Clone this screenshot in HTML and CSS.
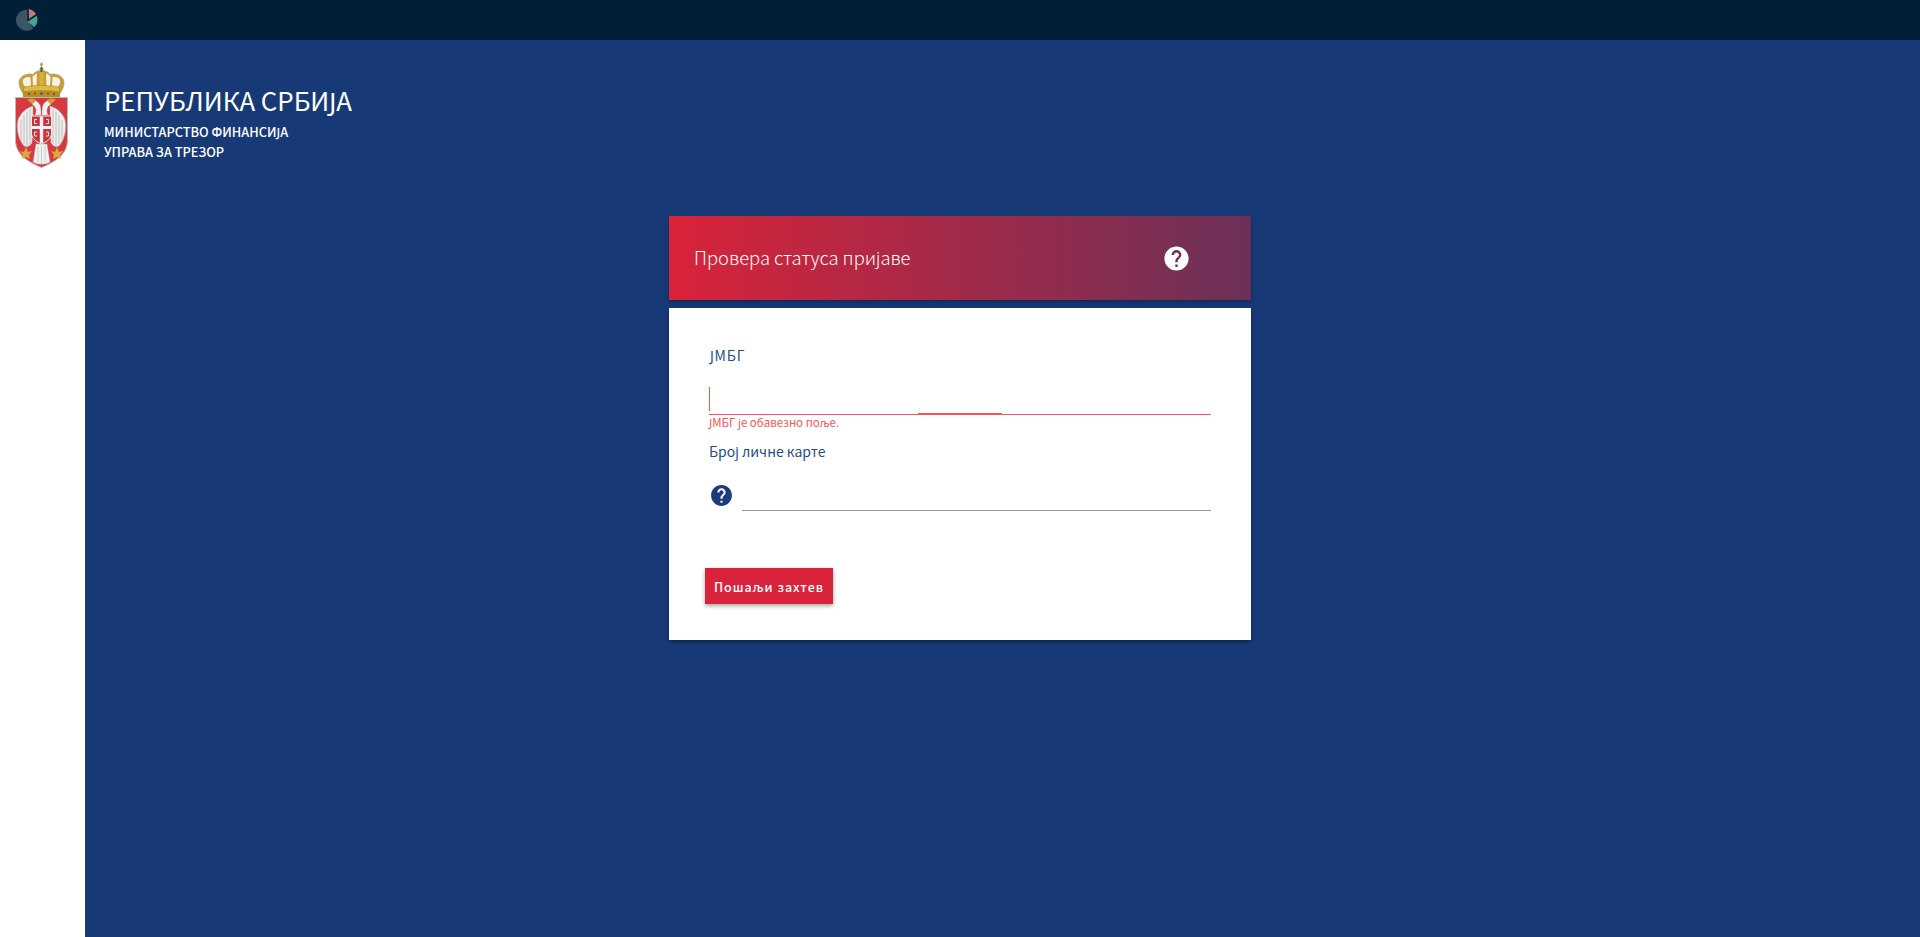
FILE: index.html
```html
<!DOCTYPE html>
<html lang="sr">
<head>
    <meta charset="UTF-8">
    <meta name="viewport" content="width=device-width, initial-scale=1.0">
    <title>Провера статуса пријаве</title>
    <link rel="stylesheet" href="styles.css">
</head>
<body>
    <header class="topbar">
        <svg class="pie" width="24" height="24" viewBox="0 0 24 24">
            <path d="M12.3 1.800A10.500 10.500 0 1 0 18.300 20.300L12.300 12Z" fill="#3a5565"/>
            <path d="M13.700 1A11 11 0 0 1 21 6L14 11Z" fill="#c27b78"/>
            <path d="M21.700 7.700A11 11 0 0 1 19.300 19.300L12.700 13.700Z" fill="#3fa58c"/>
        </svg>
    </header>
    <div class="layout">
        <aside class="sidebar">
            <svg class="crest" width="53" height="106" viewBox="15 62 53 106">
                <!-- crown -->
                <path d="M25 96C20 90 18 84 19.500 80C21.500 75 28 73 33 74.500C35 71.500 38 70.500 41.500 70.500C45 70.500 48 71.500 50 74.500C55 73 61.500 75 63.500 80C65 84 63 90 58 96Z" fill="#c8a030" stroke="#a8a08c" stroke-width="0.7"/>
                <path d="M26 88C23.500 85 22 82 23 80C24.500 77 28 76.500 30.500 77.500L31 87ZM57 88C59.500 85 61 82 60 80C58.500 77 55 76.500 52.500 77.500L52 87Z" fill="#f5f2e8"/>
                <path d="M33 86.500L32.500 77C33.500 75.500 35 74 37 73.500L36.500 86ZM50 86.500L50.500 77C49.500 75.500 48 74 46 73.500L46.500 86Z" fill="#f5f2e8"/>
                <rect x="39.500" y="68" width="4" height="19" fill="#d9b040"/>
                <rect x="40.500" y="67" width="2" height="5" fill="#2c5b8f"/>
                <path d="M41.500 62L43.200 64.500L41.500 67.200L39.800 64.500Z" fill="#c8a030"/>
                <path d="M24 87C32 85 51 85 59 87L60 92C50 90.500 33 90.500 23 92Z" fill="#dcb846" stroke="#8d6a1c" stroke-width="0.4"/>
                <path d="M23 91.500C33 90 50 90 60 91.500L60 97H23Z" fill="#b98e1f"/>
                <circle cx="29" cy="94" r="1.100" fill="#2c5b8f"/>
                <circle cx="41.500" cy="93.500" r="1.300" fill="#2c5b8f"/>
                <circle cx="54" cy="94" r="1.100" fill="#2c5b8f"/>
                <circle cx="35" cy="93.500" r="0.900" fill="#b5282c"/>
                <circle cx="48" cy="93.500" r="0.900" fill="#b5282c"/>
                <!-- shield -->
                <path d="M15.500 97.500H67.500V140C67.500 156 52 163 41.500 167.500C31 163 15.500 156 15.500 140Z" fill="#d8383f" stroke="#b9b9b9" stroke-width="1"/>
                <!-- eagle -->
                <path d="M33 106C26 108 19 114 17.500 122C16.500 130 18.500 140 24 146C27 148 30 146 32 143L33 118Z" fill="#ececec" stroke="#a9a9a9" stroke-width="0.5"/>
                <path d="M50 106C57 108 64 114 65.500 122C66.500 130 64.500 140 59 146C56 148 53 146 51 143L50 118Z" fill="#ececec" stroke="#a9a9a9" stroke-width="0.5"/>
                <path d="M21 120V140M24 115V144M27 112V146M30 109V145M62 120V140M59 115V144M56 112V146M53 109V145" stroke="#a8a8a8" stroke-width="0.6"/>
                <path d="M30 101C33 99 38 101 40 105C41 108 41 112 41 115H35C37 111 36 107 33 105Z" fill="#f1f1f1" stroke="#a9a9a9" stroke-width="0.4"/>
                <path d="M53 101C50 99 45 101 43 105C42 108 42 112 42 115H48C46 111 47 107 50 105Z" fill="#f1f1f1" stroke="#a9a9a9" stroke-width="0.4"/>
                <path d="M27 100C30 98 34 98 36 100L33 104Z" fill="#c8a030"/>
                <path d="M56 100C53 98 49 98 47 100L50 104Z" fill="#c8a030"/>
                <path d="M36 144H47L50 162C46 165 37 165 33 162Z" fill="#f1f1f1" stroke="#a9a9a9" stroke-width="0.5"/>
                <path d="M38 146V162M41.500 146V164M45 146V162" stroke="#b5b5b5" stroke-width="0.6"/>
                <!-- fleurs -->
                <path d="M24 152L26 147L28 152L32 151L29 155L30 159L26 157L22 159L23 155L20 151Z" fill="#d9a93c"/>
                <path d="M59 152L57 147L55 152L51 151L54 155L53 159L57 157L61 159L60 155L63 151Z" fill="#d9a93c"/>
                <!-- inner shield -->
                <path d="M31.500 116H51.500V133C51.500 139 46 142 41.500 144C37 142 31.500 139 31.500 133Z" fill="#c7363c" stroke="#ededed" stroke-width="1"/>
                <path d="M39.800 116.500H43.200V126H51V129H43.200V143H39.800V129H32V126H39.800Z" fill="#f4f4f4"/>
                <path d="M37 119.500H34.500V123.500H37M46 119.500H48.500V123.500H46M37 132H34.500V136H37M46 132H48.500V136H46" fill="none" stroke="#f4f4f4" stroke-width="0.9"/>
            </svg>
        </aside>
        <main class="main">
            <div class="brand">
                <div class="brand-title">РЕПУБЛИКА СРБИЈА</div>
                <div class="brand-sub">МИНИСТАРСТВО ФИНАНСИЈА</div>
                <div class="brand-sub">УПРАВА ЗА ТРЕЗОР</div>
            </div>

            <section class="card">
                <div class="card-head">
                    <h1>Провера статуса пријаве</h1>
                    <svg class="head-help" width="29" height="29" viewBox="0 0 24 24">
                        <path d="M12 2C6.48 2 2 6.48 2 12s4.480 10 10 10 10-4.480 10-10S17.520 2 12 2zm1 17h-2v-2h2v2zm2.070-7.750l-.9.920C13.450 12.900 13 13.500 13 15h-2v-.5c0-1.100.450-2.100 1.170-2.830l1.240-1.260c.370-.360.590-.860.590-1.410 0-1.100-.9-2-2-2s-2 .9-2 2H8c0-2.210 1.790-4 4-4s4 1.790 4 4c0 .880-.360 1.680-.930 2.250z"/>
                    </svg>
                </div>
                <form class="card-body">
                    <label class="field-label first" for="jmbg">ЈМБГ</label>
                    <div class="input-wrap invalid">
                        <input id="jmbg" type="text">
                    </div>
                    <div class="field-error">ЈМБГ је обавезно поље.</div>

                    <label class="field-label second" for="card-no">Број личне карте</label>
                    <div class="input-row">
                        <svg class="row-help" width="25" height="25" viewBox="0 0 24 24">
                            <path d="M12 2C6.48 2 2 6.48 2 12s4.480 10 10 10 10-4.480 10-10S17.520 2 12 2zm1 17h-2v-2h2v2zm2.070-7.750l-.9.920C13.450 12.900 13 13.500 13 15h-2v-.5c0-1.100.450-2.100 1.170-2.830l1.240-1.260c.370-.360.590-.860.590-1.410 0-1.100-.9-2-2-2s-2 .9-2 2H8c0-2.210 1.790-4 4-4s4 1.790 4 4c0 .880-.360 1.680-.930 2.250z"/>
                        </svg>
                        <div class="input-wrap">
                            <input id="card-no" type="text">
                        </div>
                    </div>

                    <button class="btn" type="button">Пошаљи захтев</button>
                </form>
            </section>
        </main>
    </div>
</body>
</html>
```

FILE: styles.css
```css
html, body {
    height: 100%;
}
body {
    font-family: "Noto Sans CJK SC", "Noto Sans", sans-serif;
    background: #173a77;
    margin: 0;
    display: flex;
    flex-direction: column;
    overflow: hidden;
}
.topbar {
    background: #021f38;
    height: 40px;
    flex: none;
    display: flex;
    align-items: center;
    padding-left: 15px;
}
.pie {
    display: block;
}
.layout {
    flex: 1;
    display: flex;
}
.sidebar {
    background: white;
    width: 85px;
    flex: none;
    padding: 22px 0 0 15px;
    box-sizing: border-box;
}
.crest {
    display: block;
}
.main {
    flex: 1;
    padding: 42px 0 0 19px;
}
.brand {
    color: white;
}
.brand-title {
    font-size: 25.8px;
    line-height: 36px;
    margin-bottom: 4px;
}
.brand-sub {
    font-size: 12.8px;
    font-weight: 500;
    line-height: 20px;
}
.card {
    width: 582px;
    margin: 54px 0 0 565px;
}
.card-head {
    background: linear-gradient(to right, #d9233a 0%, #6b3158 100%);
    height: 84px;
    display: flex;
    align-items: center;
    padding: 0 60px 0 25px;
    box-shadow: 0 2px 4px rgba(0,0,0,0.3);
    margin-bottom: 8px;
}
.card-head h1 {
    flex: 1;
    margin: 0;
    color: white;
    font-size: 18.4px;
    font-weight: 300;
    position: relative;
    top: -1px;
}
.head-help {
    fill: white;
    display: block;
}
.card-body {
    background: white;
    padding: 37px 40px 36px;
    box-shadow: 0 2px 4px rgba(0,0,0,0.4);
}
.field-label {
    display: block;
    color: #1f5084;
    font-size: 14px;
    line-height: 20px;
}
.field-label.first {
    letter-spacing: 0.8px;
    padding-left: 1px;
}
.field-label.second {
    margin-top: 12px;
}
.input-wrap {
    position: relative;
    flex: 1;
    margin-top: 22px;
    height: 28px;
    box-sizing: border-box;
    border-bottom: 1px solid #949494;
}
.input-wrap input {
    display: block;
    width: 100%;
    height: 24px;
    box-sizing: border-box;
    padding: 0;
    border: none;
    outline: none;
    background: transparent;
}
.input-wrap.invalid {
    border-bottom-color: #ff5252;
}
.input-wrap.invalid input {
    border-left: 1px solid #ff5252;
}
.input-wrap.invalid::after {
    content: "";
    position: absolute;
    left: 50%;
    bottom: -1px;
    width: 84px;
    height: 2px;
    margin-left: -42px;
    background: #ff5252;
}
.field-error {
    color: #ff5252;
    font-size: 11.5px;
    line-height: 14px;
}
.input-row {
    display: flex;
    align-items: flex-end;
    gap: 8px;
}
.row-help {
    fill: #1a3c7c;
    flex: none;
    display: block;
    margin-bottom: 3px;
}
.btn {
    display: block;
    margin: 57px 0 0 -4px;
    width: 128px;
    height: 36px;
    padding: 0;
    border: none;
    background: #d9233b;
    color: white;
    font-family: inherit;
    font-size: 12.5px;
    font-weight: 500;
    letter-spacing: 1px;
    cursor: pointer;
    box-shadow: 0 2px 4px rgba(0,0,0,0.35);
}
```
